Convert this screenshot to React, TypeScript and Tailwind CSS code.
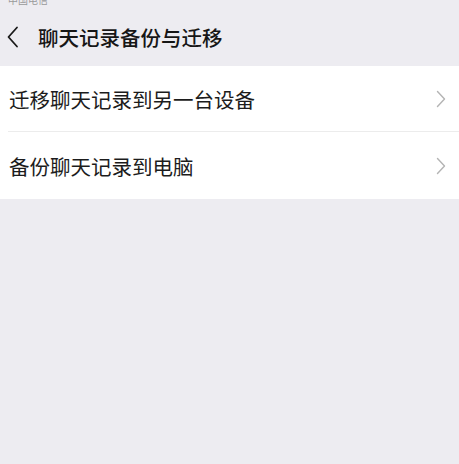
import React from "react";

const rows = ["迁移聊天记录到另一台设备", "备份聊天记录到电脑"];

function Chevron() {
  return (
    <svg width="10" height="18" viewBox="0 0 10 18" fill="none" className="shrink-0">
      <path d="M1.5 1.5 L8.5 9 L1.5 16.5" stroke="#b4b4b4" strokeWidth="1.4" strokeLinecap="round" strokeLinejoin="round" />
    </svg>
  );
}

export default function App() {
  return (
    <div
      className="w-[459px] h-[464px] bg-[#edecf1] overflow-hidden"
      style={{ fontFamily: '"Noto Sans CJK SC", "Noto Sans", sans-serif' }}
    >
      {/* status bar carrier name, clipped by the top edge */}
      <div className="h-[10px] relative overflow-hidden">
        <span className="absolute left-[8px] top-[-7px] text-[10px] leading-[14px] text-[#9a9a9a]">中国电信</span>
      </div>
      {/* navigation bar */}
      <div className="h-[56px] flex items-center pl-[6px] pb-[2px]">
        <svg width="14" height="22" viewBox="0 0 14 22" fill="none">
          <path d="M11 1.5 L2.5 11 L11 20.5" stroke="#1a1a1a" strokeWidth="1.8" strokeLinecap="round" strokeLinejoin="round" />
        </svg>
        <span className="ml-[18px] text-[20.5px] leading-[28px] font-medium text-[#161616]">聊天记录备份与迁移</span>
      </div>
      {/* settings list */}
      <div className="bg-white">
        {rows.map((label, i) => (
          <div key={label} className="pl-[8px]">
            <div
              className={`flex items-center justify-between pr-[13px] ${
                i < rows.length - 1 ? "h-[66px] border-b border-[#ececec]" : "h-[67px]"
              }`}
            >
              <span className="text-[20.5px] leading-[28px] text-[#1c1c1c] ml-[1px]">{label}</span>
              <Chevron />
            </div>
          </div>
        ))}
      </div>
    </div>
  );
}
